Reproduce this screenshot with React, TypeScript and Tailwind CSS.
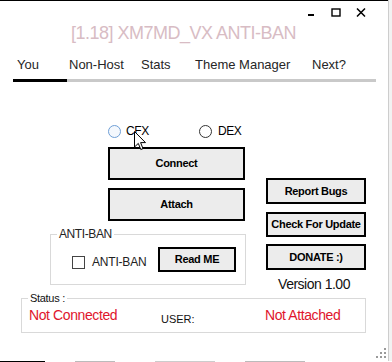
import React from "react";

const font = { fontFamily: '"Liberation Sans", Arial, sans-serif' };

function Btn({ label, className }: { label: string; className: string }) {
  return (
    <div
      className={
        "flex items-center justify-center border-2 border-black bg-[#ececec] text-[11px] font-bold tracking-[-0.3px] text-black " +
        className
      }
    >
      {label}
    </div>
  );
}

export default function App() {
  return (
    <div className="flex h-[362px] w-[392px] flex-col overflow-hidden bg-white" style={font}>
      <div className="relative flex h-[361px]">
        {/* main window */}
        <div className="flex h-[361px] w-[388px] flex-col border-t border-black bg-white">
          {/* window controls */}
          <div className="flex h-[20px] items-start pl-[307px] pt-[7px]">
            <svg width="9" height="9" viewBox="0 0 9 9">
              <rect x="1" y="6" width="6" height="2" fill="#000" />
            </svg>
            <svg className="ml-[15px]" width="10" height="9" viewBox="0 0 10 9">
              <rect x="1" y="1" width="8" height="7" fill="none" stroke="#000" strokeWidth="1.4" />
            </svg>
            <svg className="ml-[15px]" width="10" height="9" viewBox="0 0 10 9">
              <path d="M1 0.5 L9 8.5 M9 0.5 L1 8.5" stroke="#000" strokeWidth="1.5" />
            </svg>
          </div>
          {/* title */}
          <div className="h-[24px] pl-[71px] text-[18px] leading-[24px] tracking-[-0.5px] text-[#d8bcc4]">
            [1.18] XM7MD_VX ANTI-BAN
          </div>
          {/* tabs */}
          <div className="flex pl-[17px] pt-[12px] pb-[6px] text-[13px] leading-[16px] text-[#262626]">
            <div className="w-[52px]">You</div>
            <div className="w-[72px]">Non-Host</div>
            <div className="w-[54px]">Stats</div>
            <div className="w-[117px]">Theme Manager</div>
            <div>Next?</div>
          </div>
          <div className="ml-[13px] flex h-[3px] w-[363px]">
            <div className="w-[54px] bg-black" />
            <div className="flex-1 bg-[#c9c9c9]" />
          </div>

          {/* content */}
          <div className="flex h-[216px]">
            <div className="flex w-[246px] flex-col">
              {/* radios */}
              <div className="ml-[108px] mt-[43px] flex h-[13px] items-center text-[12px] tracking-[-0.4px] text-black">
                <div className="flex w-[91px] items-center">
                  <div className="h-[13px] w-[13px] rounded-full border border-[#6f9fd6] bg-[#f4f8fd]" />
                  <span className="ml-[5px] leading-[13px]">CFX</span>
                </div>
                <div className="flex items-center">
                  <div className="h-[13px] w-[13px] rounded-full border border-[#333]" />
                  <span className="ml-[6px] leading-[13px]">DEX</span>
                </div>
              </div>
              <Btn label="Connect" className="ml-[108px] mt-[9px] h-[33px] w-[137px]" />
              <Btn label="Attach" className="ml-[108px] mt-[8px] h-[33px] w-[137px]" />
              {/* anti-ban group */}
              <div className="ml-[50px] mt-[13px] flex h-[51px] w-[196px] flex-col border border-[#d9d9d9]">
                <div className="-mt-[8px] flex h-[14px]">
                  <span className="ml-[6px] bg-white px-[2px] text-[12px] leading-[14px] tracking-[-0.4px] text-[#222]">
                    ANTI-BAN
                  </span>
                </div>
                <div className="mt-[6px] flex items-start">
                  <div className="ml-[21px] mt-[9px] flex w-[86px] items-center">
                    <div className="h-[13px] w-[13px] border border-[#444]" />
                    <span className="ml-[7px] text-[12px] leading-[13px] tracking-[-0.2px] text-[#222]">
                      ANTI-BAN
                    </span>
                  </div>
                  <Btn label="Read ME" className="h-[25px] w-[78px]" />
                </div>
              </div>
            </div>
            <div className="ml-[20px] flex w-[100px] flex-col">
              <Btn label="Report Bugs" className="mt-[96px] h-[26px] w-[100px]" />
              <Btn label="Check For Update" className="mt-[8px] h-[25px] w-[100px]" />
              <Btn label="DONATE :)" className="mt-[7px] h-[26px] w-[100px]" />
              <div className="mt-[6px] pr-[4px] text-center text-[14px] leading-[16px] tracking-[-0.5px] text-[#111]">
                Version 1.00
              </div>
            </div>
          </div>

          {/* status group */}
          <div className="ml-[21px] flex h-[35px] w-[345px] flex-col border border-[#d9d9d9]">
            <div className="-mt-[8px] flex h-[14px]">
              <span className="ml-[6px] bg-white px-[2px] text-[11px] leading-[14px] tracking-[-0.3px] text-[#111]">
                Status :
              </span>
            </div>
            <div className="mt-[2px] flex items-start">
              <div className="ml-[7px] w-[132px] text-[14px] leading-[16px] tracking-[-0.4px] text-[#e0142c]">
                Not Connected
              </div>
              <div className="mt-[4px] w-[104px] text-[11px] leading-[16px] text-[#111]">USER:</div>
              <div className="text-[14px] leading-[16px] tracking-[-0.4px] text-[#e0142c]">Not Attached</div>
            </div>
          </div>

          {/* size grip */}
          <div className="mt-[13px] flex justify-end">
            <svg width="12" height="12" viewBox="0 0 12 12">
              <g fill="#9a9a9a">
                <rect x="8" y="2" width="2" height="2" />
                <rect x="4" y="6" width="2" height="2" />
                <rect x="8" y="6" width="2" height="2" />
                <rect x="0" y="10" width="2" height="2" />
                <rect x="4" y="10" width="2" height="2" />
                <rect x="8" y="10" width="2" height="2" />
              </g>
            </svg>
          </div>
        </div>
        {/* right strip */}
        <div className="flex w-[4px] flex-col border-l border-[#cdcdcd] bg-[#f2f2f2]" />

        {/* mouse cursor */}
        <svg className="absolute left-[134px] top-[131px]" width="13" height="20" viewBox="0 0 13 20">
          <path d="M0.5 0.5 L0.5 16 L4.3 12.4 L6.8 18.5 L9 17.6 L6.6 11.6 L11.5 11.6 Z" fill="#fff" stroke="#000" strokeWidth="1" />
        </svg>
      </div>
      <div className="flex h-[1px]">
        <div className="w-[45px] bg-black" />
        <div className="ml-[30px] w-[40px] bg-[#bbbbbb]" />
        <div className="ml-[40px] w-[60px] bg-[#cccccc]" />
        <div className="ml-[30px] w-[60px] bg-[#bbbbbb]" />
      </div>
    </div>
  );
}
